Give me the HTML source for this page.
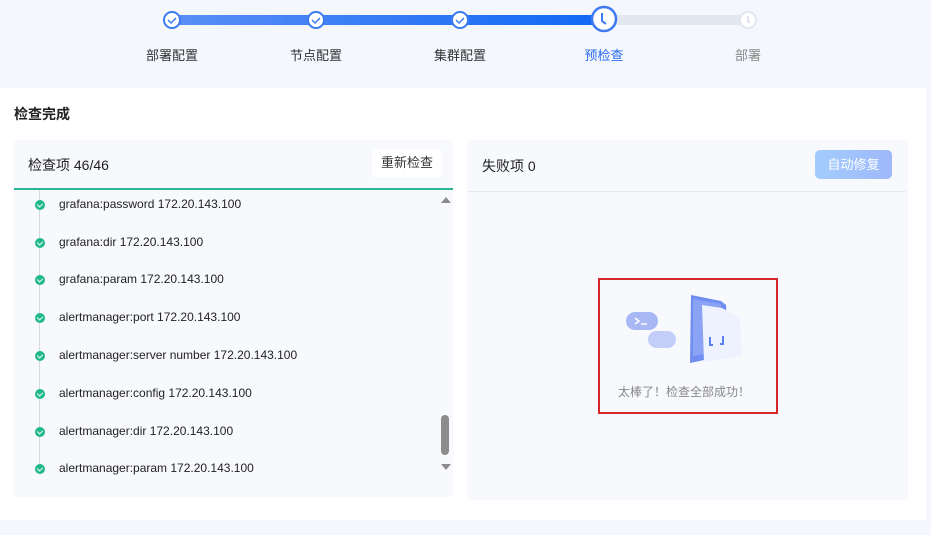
<!DOCTYPE html>
<html><head><meta charset="utf-8"><style>
*{margin:0;padding:0;box-sizing:border-box}
body{width:931px;height:535px;background:#f4f7fd;font-family:"Liberation Sans","Noto Sans CJK SC",sans-serif;position:relative;overflow:hidden;color:#222}
.a{position:absolute}
.lbl{position:absolute;top:45px;font-size:13px;color:#333;transform:translateX(-50%);white-space:nowrap}
.item{position:absolute;left:59px;font-size:12px;color:#222;white-space:nowrap}
.dot{position:absolute;left:35px;width:10px;height:10px;border-radius:50%;background:#1fba86}
.dot:after{content:"";position:absolute;left:3px;top:2px;width:3px;height:4px;border:solid #fff;border-width:0 1.3px 1.3px 0;transform:rotate(45deg)}
</style></head><body>
<div class="a" style="left:172px;top:15px;width:432px;height:10px;background:linear-gradient(90deg,#5a8ff5,#1168f5)"></div>
<div class="a" style="left:604px;top:15px;width:144px;height:10px;background:#e3e7ef"></div>
<svg class="a" style="left:0;top:0" width="931" height="40">
<g fill="#fff" stroke="#3d7af0" stroke-width="2">
<circle cx="172" cy="20" r="8"/><circle cx="316" cy="20" r="8"/><circle cx="460" cy="20" r="8"/>
<circle cx="604" cy="19" r="12" stroke-width="2.5"/>
</g>
<g fill="none" stroke="#3d7af0" stroke-width="1.5"><path d="M168 20l3 3 5-5M312 20l3 3 5-5M456 20l3 3 5-5"/><path d="M602 13v8l4 3" stroke-width="2"/></g>
<circle cx="748" cy="20" r="8" fill="#fff" stroke="#e3e7ef" stroke-width="2"/>
<path d="M748 16v5l2 2" stroke="#d5dbe6" fill="none" stroke-width="1.5"/>
</svg>
<div class="lbl" style="left:172px">部署配置</div>
<div class="lbl" style="left:316px">节点配置</div>
<div class="lbl" style="left:460px">集群配置</div>
<div class="lbl" style="left:604px;color:#2a6cf0">预检查</div>
<div class="lbl" style="left:748px;color:#888">部署</div>

<div class="a" style="left:0;top:88px;width:926px;height:432px;background:#fff"></div>
<div class="a" style="left:14px;top:104px;font-size:14px;font-weight:bold;color:#222">检查完成</div>

<div class="a" style="left:14px;top:140px;width:439px;height:357px;background:#f7f9fd;border-radius:4px"></div>
<div class="a" style="left:28px;top:155px;font-size:14px">检查项 46/46</div>
<div class="a" style="left:372px;top:149px;width:70px;height:28px;background:#fff;border-radius:4px;font-size:13px;text-align:center;line-height:28px;color:#333">重新检查</div>
<div class="a" style="left:14px;top:188px;width:439px;height:1.5px;background:#2bb596"></div>
<div class="a" style="left:39px;top:190px;width:1px;height:282px;background:#d6dae2"></div>
<div class="dot" style="top:200px"></div><div class="item" style="top:197px">grafana:password 172.20.143.100</div>
<div class="dot" style="top:238px"></div><div class="item" style="top:235px">grafana:dir 172.20.143.100</div>
<div class="dot" style="top:275px"></div><div class="item" style="top:272px">grafana:param 172.20.143.100</div>
<div class="dot" style="top:313px"></div><div class="item" style="top:310px">alertmanager:port 172.20.143.100</div>
<div class="dot" style="top:351px"></div><div class="item" style="top:348px">alertmanager:server number 172.20.143.100</div>
<div class="dot" style="top:389px"></div><div class="item" style="top:386px">alertmanager:config 172.20.143.100</div>
<div class="dot" style="top:427px"></div><div class="item" style="top:424px">alertmanager:dir 172.20.143.100</div>
<div class="dot" style="top:464px"></div><div class="item" style="top:461px">alertmanager:param 172.20.143.100</div>
<div class="a" style="left:441px;top:415px;width:8px;height:40px;background:#8c8c8c;border-radius:4px"></div>
<svg class="a" style="left:440px;top:196px" width="12" height="8"><path d="M1 7L6 1 11 7z" fill="#8c8c8c"/></svg>
<svg class="a" style="left:440px;top:463px" width="12" height="8"><path d="M1 1L6 7 11 1z" fill="#8c8c8c"/></svg>

<div class="a" style="left:467px;top:140px;width:441px;height:360px;background:#f7f9fd;border-radius:4px"></div>
<div class="a" style="left:482px;top:156px;font-size:14px">失败项 0</div>
<div class="a" style="left:815px;top:150px;width:77px;height:29px;border-radius:5px;background:linear-gradient(90deg,#a3cdfc,#9fb8fb);color:#fff;font-size:13px;text-align:center;line-height:29px">自动修复</div>
<div class="a" style="left:467px;top:191px;width:439px;height:1px;background:#e4e8ef"></div>

<div class="a" style="left:598px;top:278px;width:180px;height:136px;border:2px solid #d9262c"></div>
<svg class="a" style="left:620px;top:290px" width="130" height="75">
<rect x="6" y="22" width="32" height="18" rx="9" fill="#a8b8f4"/>
<path d="M15 28l4 3-4 3M21 34h6" stroke="#fff" stroke-width="1.5" fill="none"/>
<rect x="28" y="41" width="28" height="17" rx="8.5" fill="#c3cef8"/>
<path d="M71 5l30 6 5 4 2 50-38 8z" fill="#6f8ef0"/>
<path d="M73 9l28 5 4 46-32 6z" fill="#8aa3f5"/>
<path d="M82 15l20 3 18 10 2 38-38 6z" fill="#eef2fe"/>
<path d="M90 47v8h3M103 46v8h-3" stroke="#5b7ef0" stroke-width="2" fill="none"/>
</svg>
<div class="a" style="left:618px;top:383px;font-size:12px;color:#888">太棒了！检查全部成功！</div>
</body></html>
